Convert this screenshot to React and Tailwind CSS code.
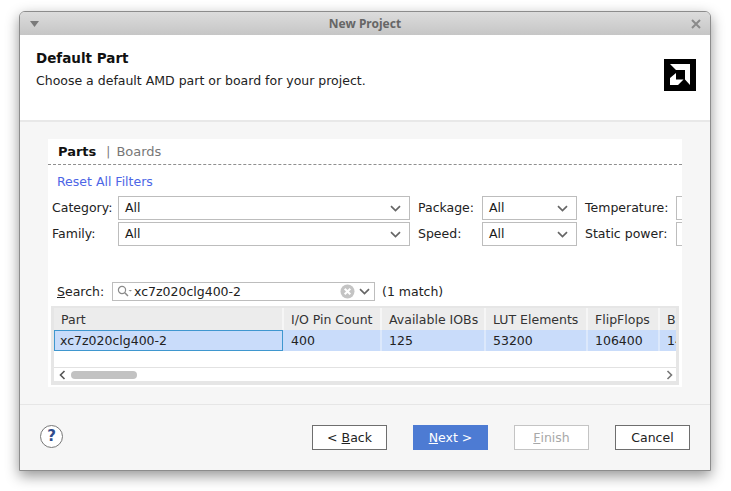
const ui = "font-['DejaVu_Sans',sans-serif]";

function Chevron({ className = '' }) {
  return (
    <svg width="11" height="7" viewBox="0 0 11 7" className={className}>
      <path d="M1 1.2 L5.5 5.5 L10 1.2" fill="none" stroke="#666" strokeWidth="1.7" />
    </svg>
  );
}

function AmdLogo() {
  return (
    <svg width="32" height="32" viewBox="0 0 32 32" className="shrink-0">
      <rect width="32" height="32" fill="#000" />
      <path d="M6 5 H26 V26 L21 20.5 V11 H12 Z" fill="#fff" />
      <path d="M12 14 L6 19 V26 H14 L19.5 20.5 H12 Z" fill="#fff" />
    </svg>
  );
}

function FilterSelect({ width, clipped }) {
  return (
    <div className={`${width} h-6 bg-white border border-[#bdbdbd] flex items-center justify-between pl-[6px] pr-[8px] shrink-0 text-[#1a1a1a]`}>
      {!clipped && <span>All</span>}
      {!clipped && <Chevron />}
    </div>
  );
}

const columns = [
  { label: 'I/O Pin Count', value: '400', width: 'w-[98px]' },
  { label: 'Available IOBs', value: '125', width: 'w-[104px]' },
  { label: 'LUT Elements', value: '53200', width: 'w-[102px]' },
  { label: 'FlipFlops', value: '106400', width: 'w-[72px]' },
  { label: 'BRAMs', value: '140', width: 'w-[60px]' },
];

function WizardButton({ children, variant = 'default' }) {
  const styles = {
    default: 'bg-white border-[#6e6e6e] text-[#222]',
    primary: 'bg-[#4d7bd3] border-[#4d7bd3] text-white',
    disabled: 'bg-white border-[#c4c4c4] text-[#a8a8a8]',
  };
  return (
    <button className={`w-[75px] h-[25px] border pt-px text-[12.5px] flex items-center justify-center ${styles[variant]}`}>
      {children}
    </button>
  );
}

export default function App() {
  return (
    <div className="min-h-screen bg-white pt-[11px] pl-[19px]">
      <div className={`w-[692px] h-[460px] flex flex-col rounded-t-[6px] border border-[#8c8c8c] bg-[#f6f6f6] shadow-[0_5px_14px_rgba(0,0,0,0.42)] text-[12.5px] text-[#222] ${ui}`}>

        {/* Title bar */}
        <div className="h-[23px] shrink-0 rounded-t-[5px] bg-gradient-to-b from-[#dcdcdc] to-[#c6c6c6] flex items-center justify-between pl-[10px] pr-[9px] pt-px">
          <svg width="9" height="6" viewBox="0 0 9 6"><path d="M0 0 H9 L4.5 6 Z" fill="#7a7a7a" /></svg>
          <span className="font-['Noto_Sans',sans-serif] font-bold text-[12px] text-[#666]">New Project</span>
          <svg width="10" height="10" viewBox="0 0 10 10"><path d="M1 1 L9 9 M9 1 L1 9" stroke="#8a8a8a" strokeWidth="2" /></svg>
        </div>

        {/* Page header */}
        <div className="h-[85px] shrink-0 bg-white flex justify-between pl-4 pr-[14px] pt-[15px]">
          <div>
            <div className="text-[13.5px] font-bold leading-[17px] text-[#111]">Default Part</div>
            <div className="mt-[6px] leading-[16px]">Choose a default AMD part or board for your project.</div>
          </div>
          <div className="pt-[9px]"><AmdLogo /></div>
        </div>
        <div className="h-[2px] shrink-0 bg-[#e8e8e8]" />

        {/* Parts panel */}
        <div className="h-[282px] shrink-0 pt-[17px] pl-[28px]">
          <div className="w-[634px] h-[248px] bg-white overflow-hidden flex flex-col">
            <div className="h-[26px] shrink-0 flex items-center pl-[10px] border-b border-dashed border-[#8f8f8f] text-[13px]">
              <span className="font-bold text-[#111]">Parts</span>
              <span className="ml-[10px] text-[#777] text-[12px]">|</span>
              <span className="ml-[6px] text-[#777]">Boards</span>
            </div>
            <div className="h-[31px] shrink-0 flex items-center pl-[9px] pt-[3px] text-[#4d66e6]">Reset All Filters</div>

            <div className="flex flex-col gap-[2px] pl-[4px]">
              <div className="flex items-center">
                <span className="w-[66px] shrink-0">Category:</span>
                <FilterSelect width="w-[292px]" />
                <span className="w-[64px] shrink-0 ml-2">Package:</span>
                <FilterSelect width="w-[95px]" />
                <span className="w-[91px] shrink-0 ml-2">Temperature:</span>
                <FilterSelect width="w-[20px]" clipped />
              </div>
              <div className="flex items-center">
                <span className="w-[66px] shrink-0">Family:</span>
                <FilterSelect width="w-[292px]" />
                <span className="w-[64px] shrink-0 ml-2">Speed:</span>
                <FilterSelect width="w-[95px]" />
                <span className="w-[91px] shrink-0 ml-2">Static power:</span>
                <FilterSelect width="w-[20px]" clipped />
              </div>
            </div>

            {/* Search box */}
            <div className="mt-[36px] flex items-center pl-[9px] h-[19px] shrink-0">
              <span className="w-[55px] shrink-0 pt-px"><span className="underline">S</span>earch:</span>
              <div className="w-[263px] h-[19px] shrink-0 bg-white border border-[#bdbdbd] flex items-center pl-[4px] pr-[4px]">
                <svg width="17" height="13" viewBox="0 0 17 13" className="shrink-0">
                  <circle cx="5" cy="5" r="3.6" fill="none" stroke="#8a8a8a" strokeWidth="1.2" />
                  <path d="M7.8 7.8 L11 11" stroke="#8a8a8a" strokeWidth="1.5" />
                  <path d="M11.5 5 H15 L13.25 6.5 Z" fill="#8a8a8a" />
                </svg>
                <span className="flex-1 pt-px">xc7z020clg400-2</span>
                <svg width="15" height="15" viewBox="0 0 15 15" className="shrink-0">
                  <circle cx="7.5" cy="7.5" r="7" fill="#c4c4c4" />
                  <path d="M4.7 4.7 L10.3 10.3 M10.3 4.7 L4.7 10.3" stroke="#fff" strokeWidth="2" />
                </svg>
                <Chevron className="ml-[4px] shrink-0" />
              </div>
              <span className="ml-[7px] pt-px">(1 match)</span>
            </div>

            {/* Parts table */}
            <div className="mt-[5px] ml-[3px] w-[628px] h-[79px] bg-[#e6e6e6] pt-[2px] pl-[3px] pr-[3px] pb-[4px] shrink-0">
              <div className="w-[622px] h-[73px] bg-white overflow-hidden flex flex-col">
                <div className="h-[22px] shrink-0 flex bg-[#ececec] text-[#333]">
                  <div className="w-[230px] shrink-0 border-r-2 border-[#f6f6f6] pl-[7px] pt-[2px] flex items-center">Part</div>
                  {columns.map((col) => (
                    <div key={col.label} className={`${col.width} shrink-0 border-r-2 border-[#f6f6f6] pl-[7px] pt-[2px] flex items-center whitespace-nowrap overflow-hidden`}>{col.label}</div>
                  ))}
                </div>
                <div className="h-[21px] shrink-0 flex bg-[#c9dcfa] text-[#222]">
                  <div className="w-[229px] mr-px shrink-0 border border-[#3f97cf] pl-[5px] pt-[2px] flex items-center">xc7z020clg400-2</div>
                  {columns.map((col) => (
                    <div key={col.label} className={`${col.width} shrink-0 border-r-2 border-[#dce8fb] pl-[7px] pt-[2px] flex items-center whitespace-nowrap overflow-hidden`}>{col.value}</div>
                  ))}
                </div>
                <div className="flex-1" />
                <div className="h-[14px] shrink-0 border-t border-[#e2e2e2] bg-white flex items-center justify-between pl-[5px] pr-[3px]">
                  <div className="flex items-center">
                    <svg width="7" height="10" viewBox="0 0 7 10"><path d="M5.5 1 L1.5 5 L5.5 9" fill="none" stroke="#555" strokeWidth="1.6" /></svg>
                    <div className="ml-[5px] w-[66px] h-2 rounded-full bg-[#c2c2c2]" />
                  </div>
                  <svg width="7" height="10" viewBox="0 0 7 10"><path d="M1.5 1 L5.5 5 L1.5 9" fill="none" stroke="#777" strokeWidth="1.6" /></svg>
                </div>
              </div>
            </div>
          </div>
        </div>
        <div className="h-px shrink-0 bg-[#e6e6e6]" />

        {/* Wizard buttons */}
        <div className="flex-1 flex items-start justify-between pl-5 pr-5 pt-5">
          <div className="w-[23px] h-[23px] rounded-full border border-[#777] bg-white flex items-center justify-center text-[15px] font-bold text-[#2f4c8c]">?</div>
          <div className="flex gap-[26px]">
            <WizardButton>&lt;&nbsp;<span className="underline">B</span>ack</WizardButton>
            <WizardButton variant="primary"><span className="underline">N</span>ext&nbsp;&gt;</WizardButton>
            <WizardButton variant="disabled"><span className="underline">F</span>inish</WizardButton>
            <WizardButton>Cancel</WizardButton>
          </div>
        </div>
      </div>
    </div>
  );
}
